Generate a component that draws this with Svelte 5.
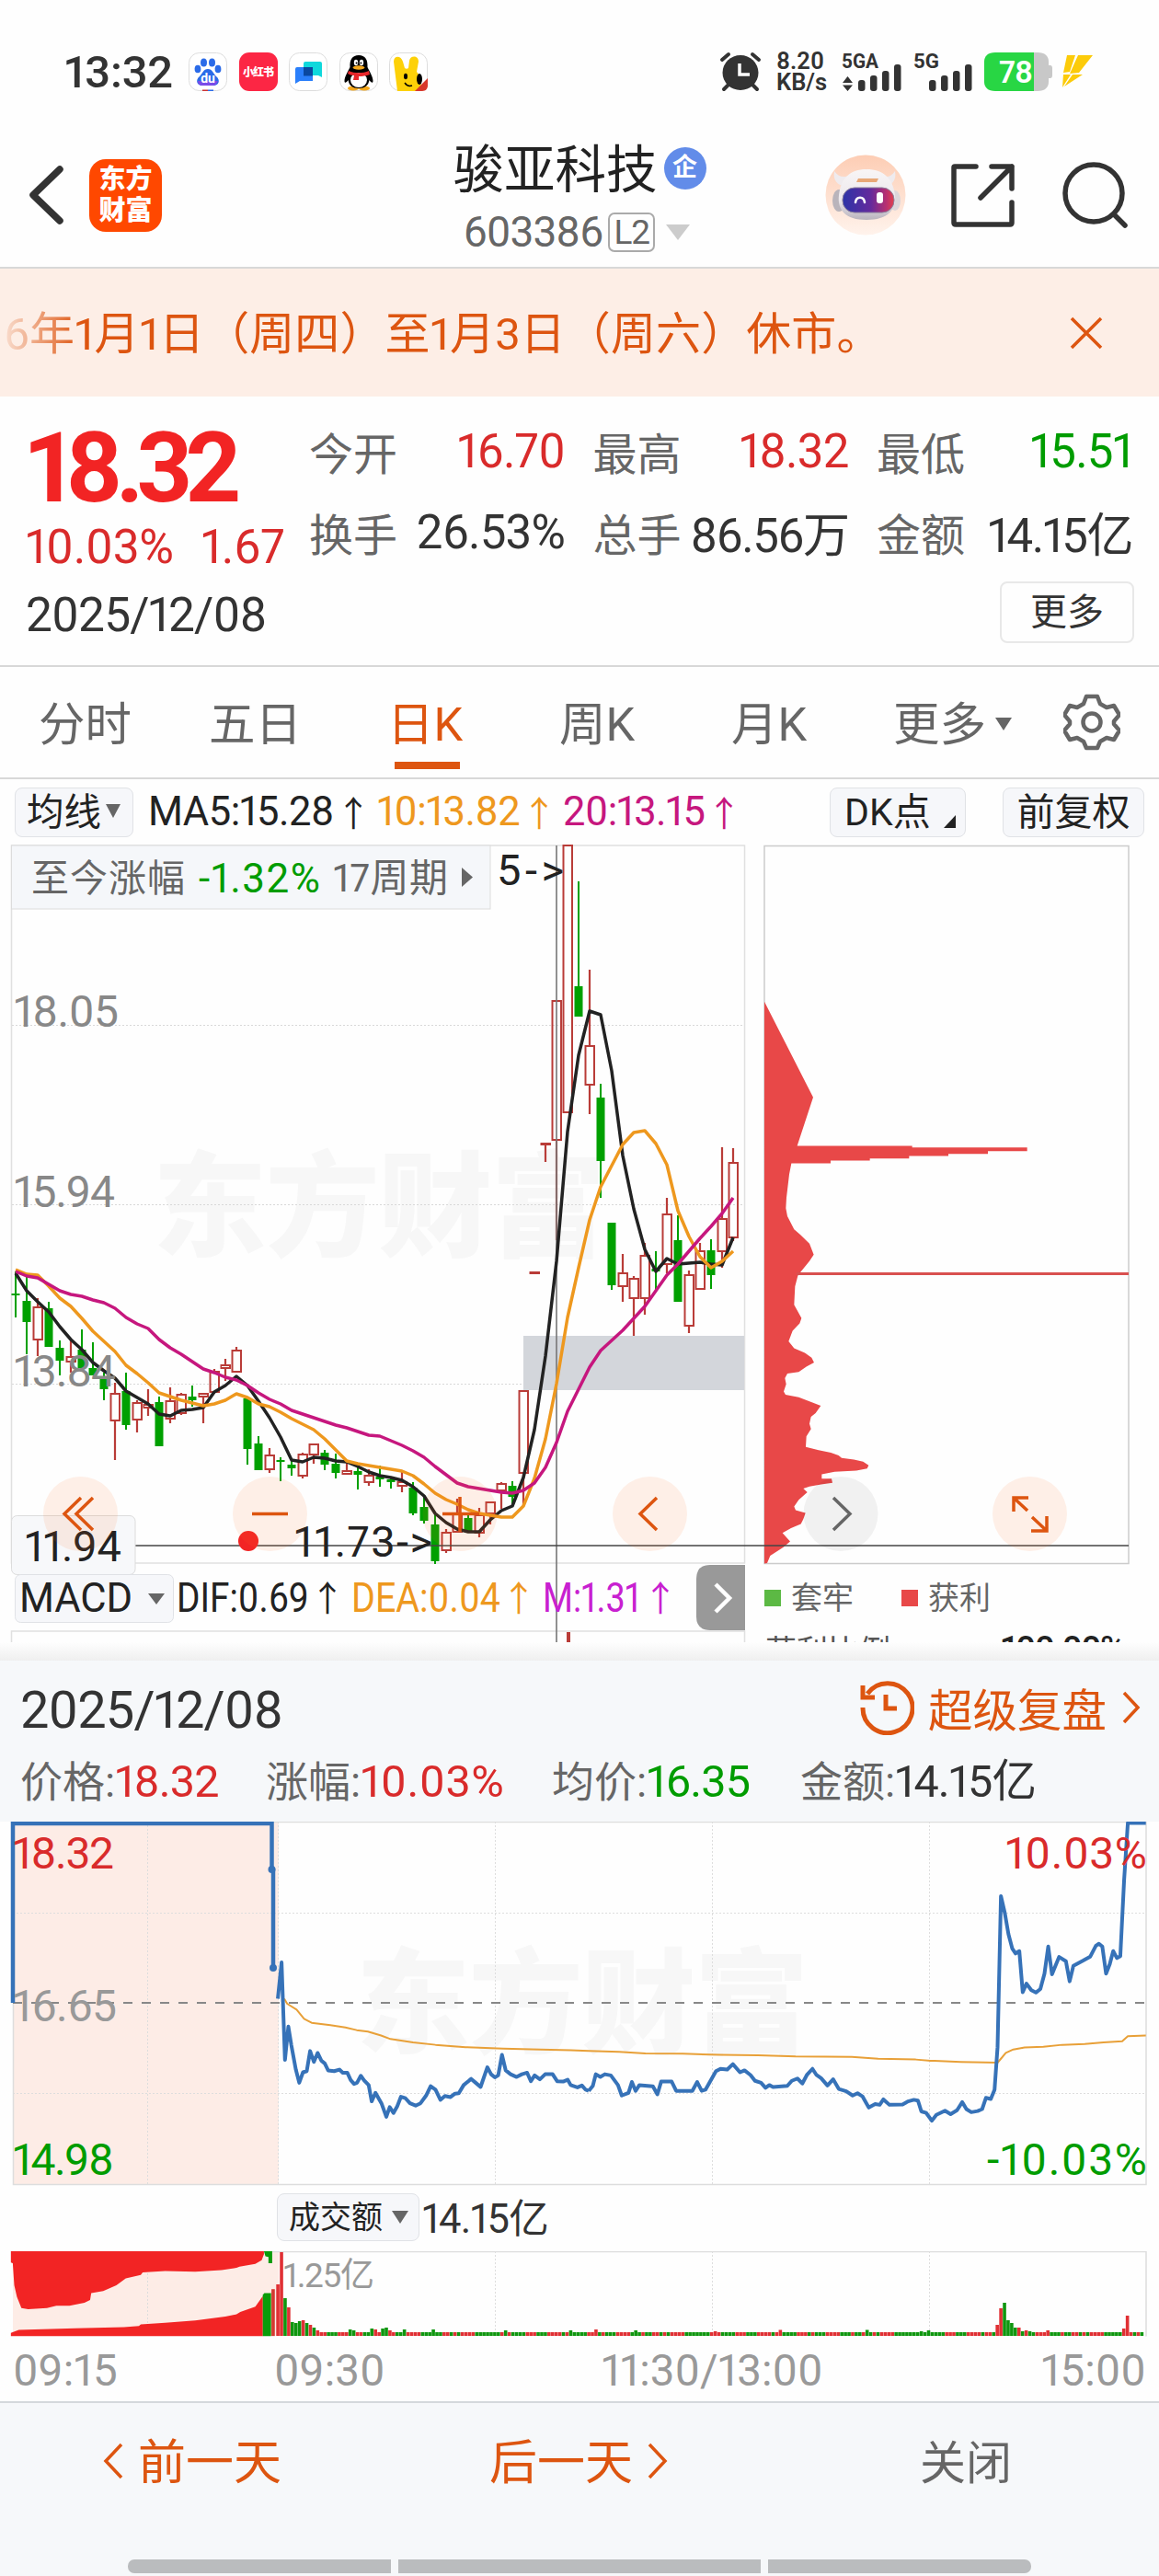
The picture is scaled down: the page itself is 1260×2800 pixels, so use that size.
<script lang="ts">
	type Tone = 'up' | 'down' | 'plain';

	const quotes: { label: string; value: string; tone: Tone }[] = [
		{ label: '今开', value: '16.70', tone: 'up' },
		{ label: '最高', value: '18.32', tone: 'up' },
		{ label: '最低', value: '15.51', tone: 'down' },
		{ label: '换手', value: '26.53%', tone: 'plain' },
		{ label: '总手', value: '86.56万', tone: 'plain' },
		{ label: '金额', value: '14.15亿', tone: 'plain' }
	];

	const daily: { label: string; value: string; tone: Tone }[] = [
		{ label: '价格:', value: '18.32', tone: 'up' },
		{ label: '涨幅:', value: '10.03%', tone: 'up' },
		{ label: '均价:', value: '16.35', tone: 'down' },
		{ label: '金额:', value: '14.15亿', tone: 'plain' }
	];

	const tabs = ['分时', '五日', '日K', '周K', '月K', '更多'];
	let activeTab = '日K';

	// candle: colour, high, body top, body bottom, low
	const candles: [string, number, number, number, number][] = [
		['g', 1382, 1406, 1408, 1432], ['g', 1388, 1414, 1437, 1472], ['r', 1411, 1421, 1456, 1474],
		['g', 1415, 1422, 1464, 1464], ['g', 1457, 1465, 1479, 1495], ['r', 1457, 1475, 1480, 1492],
		['g', 1445, 1467, 1487, 1487], ['g', 1459, 1487, 1495, 1495], ['g', 1492, 1498, 1510, 1522],
		['r', 1503, 1515, 1544, 1587], ['g', 1492, 1512, 1549, 1554], ['r', 1522, 1525, 1543, 1557],
		['r', 1510, 1527, 1530, 1539], ['g', 1518, 1524, 1572, 1572], ['r', 1508, 1523, 1542, 1547],
		['r', 1514, 1516, 1536, 1538], ['g', 1506, 1518, 1522, 1529], ['r', 1514, 1515, 1518, 1547],
		['r', 1488, 1491, 1513, 1515], ['r', 1477, 1484, 1487, 1501], ['r', 1464, 1468, 1491, 1491],
		['g', 1520, 1520, 1575, 1592], ['g', 1561, 1569, 1598, 1598], ['r', 1574, 1582, 1597, 1601],
		['g', 1584, 1587, 1589, 1610], ['g', 1585, 1592, 1596, 1604], ['r', 1579, 1581, 1604, 1607],
		['r', 1569, 1570, 1581, 1591], ['g', 1576, 1579, 1592, 1598], ['g', 1580, 1591, 1601, 1607],
		['r', 1588, 1599, 1602, 1602], ['g', 1595, 1599, 1603, 1619], ['r', 1597, 1604, 1611, 1615],
		['g', 1593, 1605, 1608, 1616], ['g', 1605, 1608, 1611, 1618], ['r', 1599, 1611, 1615, 1622],
		['g', 1611, 1617, 1645, 1647], ['g', 1627, 1638, 1653, 1656], ['g', 1645, 1657, 1697, 1700],
		['r', 1662, 1666, 1685, 1688], ['r', 1629, 1646, 1665, 1666], ['g', 1645, 1650, 1664, 1666],
		['r', 1639, 1647, 1666, 1671], ['r', 1632, 1633, 1645, 1657], ['r', 1611, 1613, 1620, 1640],
		['g', 1610, 1615, 1627, 1638], ['r', 1511, 1512, 1601, 1637], ['r', 1383, 1383, 1384, 1384],
		['r', 1243, 1243, 1244, 1263], ['r', 1088, 1088, 1239, 1348], ['r', 919, 919, 1209, 1209],
		['g', 958, 1072, 1105, 1105], ['r', 1054, 1137, 1179, 1211], ['g', 1178, 1193, 1262, 1302],
		['g', 1329, 1329, 1397, 1402], ['r', 1363, 1384, 1398, 1415], ['r', 1387, 1390, 1411, 1452],
		['r', 1351, 1365, 1411, 1429], ['g', 1360, 1379, 1382, 1402], ['r', 1302, 1320, 1374, 1384],
		['g', 1321, 1348, 1415, 1415], ['r', 1381, 1386, 1441, 1449], ['r', 1351, 1360, 1401, 1402],
		['g', 1347, 1359, 1386, 1401], ['r', 1247, 1325, 1360, 1378], ['r', 1248, 1264, 1345, 1349]
	];

	const ma5 = [
		1384, 1403, 1415, 1426, 1442, 1456, 1467, 1481, 1490, 1498, 1512, 1519, 1526, 1537, 1539, 1533, 1532,
		1530, 1513, 1506, 1496, 1506, 1523, 1541, 1562, 1587, 1589, 1584, 1585, 1588, 1589, 1594, 1600, 1604,
		1606, 1609, 1616, 1626, 1645, 1655, 1662, 1665, 1665, 1652, 1642, 1637, 1606, 1554, 1474, 1371, 1230,
		1147, 1099, 1103, 1164, 1256, 1314, 1358, 1382, 1368, 1374, 1373, 1372, 1374, 1375, 1345
	];
	const ma10 = [
		1380, 1385, 1386, 1398, 1411, 1420, 1433, 1447, 1458, 1469, 1484, 1493, 1503, 1514, 1518, 1522, 1525,
		1528, 1526, 1522, 1515, 1519, 1526, 1529, 1535, 1542, 1548, 1554, 1564, 1576, 1588, 1591, 1593, 1595,
		1597, 1599, 1604, 1613, 1623, 1630, 1635, 1641, 1645, 1647, 1649, 1649, 1637, 1607, 1564, 1504, 1432,
		1378, 1326, 1290, 1267, 1244, 1231, 1229, 1243, 1266, 1316, 1344, 1366, 1378, 1371, 1360
	];
	const ma20 = [
		1382, 1387, 1389, 1396, 1403, 1407, 1409, 1413, 1416, 1422, 1432, 1439, 1444, 1456, 1465, 1472, 1480,
		1488, 1492, 1497, 1500, 1506, 1514, 1521, 1526, 1533, 1537, 1541, 1545, 1549, 1552, 1556, 1560, 1561,
		1566, 1571, 1577, 1584, 1594, 1603, 1612, 1616, 1618, 1620, 1622, 1623, 1620, 1612, 1595, 1568, 1534,
		1510, 1486, 1468, 1457, 1446, 1433, 1420, 1403, 1386, 1374, 1360, 1346, 1333, 1319, 1302
	];

	const candleX = (i: number) => 17 + i * 12;
	const line = (ys: number[]) => ys.map((y, i) => `${candleX(i)},${y}`).join(' ');

	// cost distribution outline, drawn in its own units
	const chips =
		'93,329 252,510 200,602 575,602 575,605 950,605 950,612 822,612 822,617 693,617 693,621 565,621 565,626 437,626 437,630 309,630 309,635 181,635 174,656 165,700 163,720 168,735 190,760 210,770 240,787 254,808 240,820 212,840 202,848 193,868 190,903 214,928 208,938 185,952 172,972 190,985 225,994 247,1003 255,1012 230,1020 205,1030 168,1033 160,1042 164,1053 156,1067 162,1073 205,1078 277,1094 260,1108 245,1115 240,1128 245,1138 230,1152 228,1172 270,1178 310,1183 335,1188 345,1193 385,1196 415,1200 433,1207 428,1213 393,1217 322,1219 280,1224 280,1232 312,1232 315,1240 278,1243 240,1247 220,1251 233,1258 205,1272 190,1285 195,1292 227,1297 220,1309 212,1318 180,1326 152,1335 177,1351 155,1362 112,1378 102,1392 93,1393';

	const morning =
		'740,505 750,411 759,663 768,577 776,625 788,688 797,722 807,695 817,692 826,640 836,668 846,645 856,665 865,672 874,690 890,692 904,688 913,696 925,696 934,715 943,725 951,722 961,704 970,716 982,728 990,770 1000,748 1016,775 1029,810 1038,785 1048,800 1058,783 1068,758 1080,762 1092,775 1107,781 1120,775 1135,755 1147,731 1160,740 1173,766 1185,756 1200,759 1212,750 1222,749 1235,728 1255,712 1267,722 1280,733 1298,682 1308,700 1318,708 1327,703 1337,650 1347,690 1360,700 1376,707 1390,700 1404,696 1414,718 1424,703 1438,713 1452,700 1472,700 1484,718 1500,719 1512,714 1520,728 1538,734 1550,729 1560,740 1568,743';
	const afternoon =
		'49,743 60,730 68,700 80,707 92,700 108,703 127,728 137,755 155,748 164,720 174,743 184,728 220,731 232,752 242,719 270,719 282,743 325,743 338,720 350,743 360,740 388,692 400,686 418,688 433,674 452,695 464,690 480,702 492,717 508,722 520,735 530,728 540,733 578,730 590,717 605,711 618,724 630,702 645,686 655,701 668,710 685,729 700,713 715,738 735,744 752,755 765,749 778,757 795,786 812,777 824,779 834,765 850,779 885,778 900,770 915,766 926,768 935,796 948,800 963,820 975,805 998,794 1013,803 1030,793 1044,772 1055,790 1068,798 1085,795 1097,790 1107,761 1120,764 1130,740 1138,630 1147,240 1157,282 1167,338 1177,375 1186,388 1196,382 1205,488 1215,466 1228,483 1240,489 1252,480 1263,440 1273,370 1283,442 1302,397 1320,408 1330,460 1340,420 1365,407 1385,396 1400,368 1408,363 1417,370 1427,440 1437,415 1446,382 1456,400 1465,395 1475,200 1485,51 1533,51';
	const avgMorning =
		'757,505 765,518 790,533 810,557 830,567 880,573 920,579 950,586 980,590 1015,600 1040,609 1100,618 1160,624 1240,630 1340,634 1440,636 1520,638 1568,640';
	const avgAfternoon =
		'49,640 130,642 200,646 300,647 400,650 500,651 600,654 750,655 820,660 920,662 960,665 1040,668 1138,670 1147,660 1160,645 1180,636 1210,631 1260,629 1310,624 1370,622 1420,618 1470,615 1485,602 1533,600';

	// minute volume: quiet minutes follow the pattern, busy ones are listed
	const quiet = 'ggggrgrggggrrrgggrrrrgrrggggrrrgrgggrrrrgggrggrrgrgrrrrggg';
	const busy: Record<number, [string, number]> = {
		0: ['r', 56], 1: ['r', 91], 2: ['g', 41], 3: ['r', 31], 4: ['g', 15], 5: ['g', 14], 6: ['g', 16],
		7: ['r', 17], 8: ['g', 14], 9: ['r', 12], 10: ['g', 9], 11: ['r', 6], 20: ['g', 7], 21: ['g', 6],
		26: ['g', 8], 27: ['r', 7], 29: ['g', 8], 30: ['g', 9], 31: ['r', 6], 35: ['g', 7], 43: ['g', 7],
		63: ['g', 6], 81: ['g', 6], 88: ['r', 7], 99: ['g', 6], 121: ['r', 5], 139: ['r', 6.5],
		163: ['g', 6.5], 178: ['g', 5], 180: ['g', 6], 199: ['r', 12], 200: ['r', 30], 201: ['g', 36],
		202: ['g', 17], 203: ['g', 14], 204: ['g', 9], 205: ['r', 9], 206: ['g', 5], 207: ['r', 6],
		208: ['g', 5], 213: ['r', 6], 234: ['r', 8], 235: ['r', 22]
	};
	const volumes = Array.from({ length: 240 }, (_, i) => busy[i] ?? [quiet[i % quiet.length], 4]) as [
		string,
		number
	][];
</script>

<div class="screen">
	<div class="status">
		<span class="clock">13:32</span>
		<div class="apps">
			<svg class="app" viewBox="0 0 42 42">
				<rect x=".5" y=".5" width="41" height="41" rx="11" fill="#fff" stroke="#ddd" />
				<g fill="#2b6be8">
					<ellipse cx="10" cy="18" rx="3.4" ry="4.3" />
					<ellipse cx="16.500" cy="11" rx="3.500" ry="4.500" />
					<ellipse cx="25.500" cy="11" rx="3.500" ry="4.500" />
					<ellipse cx="32" cy="18" rx="3.400" ry="4.300" />
					<path d="M21 18c5 0 6 5 9 8 5 4 3 10-3 10H15c-6 0-8-6-3-10 3-3 4-8 9-8z" />
				</g>
				<path d="M10 31h22c-1 3-3 5-6 5H15c-3 0-5-2-5-5z" fill="#7a4be8" />
				<text x="21" y="33" font-size="14" font-weight="700" fill="#fff" text-anchor="middle">du</text>
				<path d="M15 40.500h6v1.500h-6z" fill="#c33" />
				<path d="M21 40.500h6v1.500h-6z" fill="#2b6be8" />
			</svg>
			<svg class="app" viewBox="0 0 42 42">
				<rect width="42" height="42" rx="11" fill="#fc2644" />
				<text x="21" y="26" font-size="12" font-weight="900" fill="#fff" text-anchor="middle" textLength="34">小红书</text>
			</svg>
			<svg class="app" viewBox="0 0 42 42">
				<rect x=".5" y=".5" width="41" height="41" rx="11" fill="#fff" stroke="#ddd" />
				<path d="M18 10h16a2 2 0 0 1 2 2v15l-4-2H16V12a2 2 0 0 1 2-2z" fill="#0fd8dc" />
				<path d="M9 16h17v15H12l-5 3V18a2 2 0 0 1 2-2z" fill="#2a7ffb" />
				<path d="M16 16h10v9.500H16z" fill="#0a48a0" />
			</svg>
			<svg class="app" viewBox="0 0 42 42">
				<rect x=".5" y=".5" width="41" height="41" rx="11" fill="#fff" stroke="#ddd" />
				<ellipse cx="15" cy="39" rx="6" ry="2.500" fill="#f5a91c" />
				<ellipse cx="27" cy="39" rx="6" ry="2.500" fill="#f5a91c" />
				<path d="M21 3c7 0 10 5 9.500 13 3 6 6 11 6 15 0 3-2 2-4-1-1 6-5 9-11.500 9S10.500 36 9.500 30c-2 3-4 4-4 1 0-4 3-9 6-15C11 8 14 3 21 3z" fill="#000" />
				<ellipse cx="21" cy="30" rx="9" ry="8" fill="#fff" />
				<ellipse cx="18" cy="11" rx="2.200" ry="3.200" fill="#fff" />
				<ellipse cx="24" cy="11" rx="2.200" ry="3.200" fill="#fff" />
				<circle cx="18.600" cy="11.500" r="1" /><circle cx="23.400" cy="11.500" r="1" />
				<ellipse cx="21" cy="16.500" rx="6.500" ry="2.200" fill="#f5a91c" />
				<path d="M10 20c7 3 15 3 22 0l1 4c-4 1.500-8 2-12 2v4h-6l1-5c-3 0-5-1-7-2z" fill="#e8262a" />
			</svg>
			<svg class="app" viewBox="0 0 42 42">
				<rect x=".5" y=".5" width="41" height="41" rx="11" fill="#fff" stroke="#ddd" />
				<path d="M9 42 5 10C5 3 13 3 15 10l2 7c1 1 3 1 4 0l1-8c1-6 10-6 10 1l-2 11c5 6 6 13 3 21z" fill="#fdd108" />
				<ellipse cx="18" cy="26" rx="2" ry="3.200" /><ellipse cx="33" cy="29" rx="3" ry="6" />
				<path d="M17 33c2 3 5 4 8 3" fill="none" stroke="#000" stroke-width="1.400" />
				<path d="M28 42 42 28v8c0 3-2 6-6 6z" fill="#d8392c" />
			</svg>
		</div>
		<div class="signals">
			<svg width="44" height="42" viewBox="0 0 44 42">
				<ellipse cx="22" cy="22" rx="19.500" ry="19" fill="#333" />
				<path d="M2 8 9 2M42 8 35 2M4 40l6-6M40 40l-6-6" stroke="#333" stroke-width="4" stroke-linecap="round" />
				<path d="M21 12v12h11" fill="none" stroke="#fff" stroke-width="3.500" />
			</svg>
			<div class="speed"><span>8.20</span><span>KB/s</span></div>
			<svg width="66" height="42" viewBox="0 0 66 42">
				<text x="0" y="17" font-size="22" font-weight="700" fill="#333" textLength="40" lengthAdjust="spacingAndGlyphs">5GA</text>
				<path d="m6.500 26 5.500 7H1zM6.500 42 1 35.500h11z" fill="#333" />
				<g fill="#333">
					<rect x="18" y="30" width="7.500" height="12" rx="3" /><rect x="31" y="25" width="7.500" height="17" rx="3" />
					<rect x="44" y="20" width="7.500" height="22" rx="3" /><rect x="57" y="13" width="7.500" height="29" rx="3" />
				</g>
			</svg>
			<svg width="66" height="42" viewBox="0 0 66 42">
				<text x="0" y="17" font-size="22" font-weight="700" fill="#333" textLength="28" lengthAdjust="spacingAndGlyphs">5G</text>
				<g fill="#333">
					<rect x="17" y="30" width="7.500" height="12" rx="3" /><rect x="30" y="25" width="7.500" height="17" rx="3" />
					<rect x="43" y="20" width="7.500" height="22" rx="3" /><rect x="56" y="13" width="7.500" height="29" rx="3" />
				</g>
			</svg>
			<svg width="74" height="42" viewBox="0 0 74 42">
				<path d="M54 0h4c8 0 12 4 12 10v4h2c1 0 2 1 2 3v8c0 2-1 3-2 3h-2v4c0 6-4 10-12 10h-4z" fill="#c8c8c8" />
				<path d="M12 0h42v42H12C4 42 0 38 0 32V10C0 4 4 0 12 0z" fill="#28d644" />
				<text x="16" y="33" font-size="34" font-weight="600" fill="#fff" textLength="37">78</text>
			</svg>
			<svg width="36" height="36" viewBox="0 0 36 36" class="bolt">
				<path d="M6 0h9L9 18l-7 1zM18 0h16L19 19l-10 1zM2 21h8L1 35zM12 21h11L3 34z" fill="#fccb0a" />
			</svg>
		</div>
	</div>

	<header>
		<div class="left">
			<svg width="38" height="66" viewBox="0 0 38 66">
				<path d="M33 5 4 33l29 28" fill="none" stroke="#333" stroke-width="7.500" stroke-linecap="round" stroke-linejoin="round" />
			</svg>
			<div class="logo"><span>东方</span><span>财富</span></div>
		</div>
		<div class="name">
			<div class="title">骏亚科技<i>企</i></div>
			<div class="code">603386<b>L2</b><em></em></div>
		</div>
		<div class="right">
			<svg width="88" height="88" viewBox="0 0 88 88">
				<defs>
					<linearGradient id="halo" x1="0" y1="0" x2="0" y2="1"><stop offset="0" stop-color="#fdcdb4" /><stop offset="1" stop-color="#fff3ec" /></linearGradient>
					<linearGradient id="visor"><stop offset="0" stop-color="#2c34a8" /><stop offset=".55" stop-color="#652a9c" /><stop offset=".85" stop-color="#b83070" /><stop offset="1" stop-color="#e2404c" /></linearGradient>
					<linearGradient id="shell" x1="0" y1="0" x2="0" y2="1"><stop offset="0" stop-color="#f8f5f6" /><stop offset=".6" stop-color="#ece8ec" /><stop offset="1" stop-color="#b9b3bd" /></linearGradient>
				</defs>
				<circle cx="44" cy="44" r="43.500" fill="url(#halo)" />
				<path d="M10 18c-2 10 4 17 14 16l4-12c-8 4-14 2-18-4zM76 18c2 10-4 17-12 16l-4-12c7 4 12 2 16-4z" fill="#efebee" />
				<ellipse cx="15" cy="50" rx="7" ry="12" fill="#b9b4bb" /><ellipse cx="76" cy="50" rx="6" ry="11" fill="#dcd6da" />
				<path d="M45 16c18 0 29 10 31 28 2 16-8 27-31 27S13 60 15 44c2-18 12-28 30-28z" fill="url(#shell)" />
				<path d="M36 26h22l-2 4H34z" fill="#e8a878" />
				<rect x="19" y="36" width="56" height="27" rx="13" fill="url(#visor)" stroke="#8a7f9c" />
				<path d="M33 52c1-7 9-7 10 0" fill="none" stroke="#fff" stroke-width="2.500" stroke-linecap="round" />
				<rect x="56" y="41" width="7" height="12" rx="3" fill="#fff" />
			</svg>
			<svg width="70" height="70" viewBox="0 0 70 70" class="line-icon">
				<path d="M27 4H4q-1 0-1 1v60q0 2 2 2h59q2 0 2-2V43M44 4h22v24M66 4 32 38" />
			</svg>
			<svg width="72" height="72" viewBox="0 0 72 72" class="line-icon">
				<circle cx="34" cy="34" r="31" /><path d="m56 57 12 12" />
			</svg>
		</div>
	</header>

	<div class="notice">
		<span>6年1月1日（周四）至1月3日（周六）休市。</span>
		<svg width="36" height="36" viewBox="0 0 36 36"><path d="m2 2 32 32M34 2 2 34" stroke="#dd5510" stroke-width="3.500" /></svg>
	</div>

	<section class="quote">
		<div class="price">
			<strong>18.32</strong>
			<div class="change up"><span>10.03%</span><span>1.67</span></div>
			<div class="date">2025/12/08</div>
		</div>
		<div class="details">
			<div class="grid">
				{#each quotes as q}
					<div class="cell"><span class="label">{q.label}</span><span class={q.tone}>{q.value}</span></div>
				{/each}
			</div>
			<button class="more">更多</button>
		</div>
	</section>

	<nav>
		{#each tabs as tab}
			<button class="tab" class:active={tab === activeTab} on:click={() => (activeTab = tab)}>
				{tab}{#if tab === '更多'}<em></em>{/if}
			</button>
		{/each}
		<svg width="62" height="62" viewBox="0 0 62 62" class="gear">
			<path d="M25 3h12l3 8 7 4 8-2 6 10-6 7v3l6 7-6 10-8-2-7 4-3 7H25l-3-7-7-4-8 2-6-10 6-7v-3l-6-7 6-10 8 2 7-4z" />
			<circle cx="31" cy="31" r="9.500" />
		</svg>
	</nav>

	<div class="indicators">
		<button class="chip avg">均线<em></em></button>
		<span class="ma black">MA5:15.28<i>↑</i></span>
		<span class="ma orange">10:13.82<i>↑</i></span>
		<span class="ma pink">20:13.15<i>↑</i></span>
		<button class="chip dk">DK点<em></em></button>
		<button class="chip">前复权</button>
	</div>

	<svg class="kline" width="1260" height="867" viewBox="0 918 1260 867">
		<text class="mark" x="166" y="1356" font-size="124" textLength="492">东方财富</text>
		<g class="frame">
			<rect x="12.500" y="919" width="797" height="780" />
			<path d="M12.500 1785v-12h797v12" />
		</g>
		<path d="M13 1114.500h796M13 1309.500h796M13 1504.500h796" stroke="#d8d8d8" stroke-dasharray="2 2" />
		<rect x="569" y="1452" width="240" height="59" fill="#d3d6db" />

		{#each candles as [kind, high, top, bottom, low], i}
			{#if kind === 'g'}
				<path d="M{candleX(i)} {high}V{low}" stroke="#00a000" stroke-width="2" />
				<rect x={candleX(i) - 4.5} y={top} width="9" height={bottom - top} fill="#00a000" />
			{:else}
				<path d="M{candleX(i)} {high}V{top}M{candleX(i)} {bottom}V{low}" stroke="#b93c38" stroke-width="2.200" />
				<rect x={candleX(i) - 4.5} y={top} width="9.500" height={bottom - top} fill="none" stroke="#b93c38" stroke-width="2" />
			{/if}
		{/each}
		<path d="M605 919V1785" stroke="#777" stroke-width="2" opacity=".8" />
		<polyline class="ma-line" points={line(ma5)} stroke="#222" />
		<polyline class="ma-line" points={line(ma10)} stroke="#ee981e" />
		<polyline class="ma-line" points={line(ma20)} stroke="#c6177e" />

		<g class="axis">
			<text x="15" y="1116" textLength="114">18.05</text>
			<text x="15" y="1312" textLength="110">15.94</text>
			<text x="15" y="1507" textLength="111">13.84</text>
		</g>
		<rect x="12.500" y="919" width="520.500" height="69" fill="#f5f7fa" stroke="#dcdcdc" />
		<text x="34" y="969" font-size="41" fill="#666" textLength="167">至今涨幅</text>
		<text x="216" y="970" font-size="44" fill="#009c00" textLength="132">-1.32%</text>
		<text x="362" y="969" font-size="42" fill="#666" textLength="125">17周期</text>
		<path d="m502 943 12 10.500-12 10.500z" fill="#666" />
		<text x="540" y="962" font-size="47" fill="#222" textLength="73">5-&gt;</text>

		<rect x="831" y="919.500" width="396" height="780" fill="none" stroke="#ccc" stroke-width="1.500" />
		<polygon points={chips} transform="translate(800 900) scale(.33333 .574)" fill="#e84848" />
		<path d="M866 1384.500h361" stroke="#d9504f" stroke-width="3" />

		<path d="M147 1680H1227" stroke="#444" stroke-width="1.300" />
		<rect x="12.500" y="1647.500" width="134.500" height="64" rx="6" fill="#f7f8fa" stroke="#dcdcdc" />
		<text x="27" y="1697" font-size="47" fill="#222" textLength="105">11.94</text>
		<circle cx="270" cy="1675" r="11" fill="#f22424" />
		<text x="320" y="1692" font-size="47" fill="#222" textLength="150">11.73-&gt;</text>

		<g class="tools">
			<circle cx="87.500" cy="1645.500" r="40.500" />
			<circle cx="293.500" cy="1645.500" r="40.500" />
			<circle cx="500" cy="1645.500" r="40.500" />
			<circle cx="706.500" cy="1645.500" r="40.500" />
			<circle class="off" cx="914" cy="1645.500" r="40.500" />
			<circle cx="1119.500" cy="1645.500" r="40.500" />
			<path d="m88 1628-18 17.500 18 17.500M101 1628l-18 17.500 18 17.500M274 1645.500h39M481 1645.500h40M500 1627v38M714 1628l-18 17.500 18 17.500" />
			<path d="m906 1628 18 17.500-18 17.500" stroke="#666" />
			<path d="M1118 1628h-16v15M1102 1628l15 14M1121 1664h17v-16M1138 1664l-16-15" />
		</g>

		<rect x="16.500" y="1711.500" width="172" height="52" rx="6" class="pill" />
		<text x="21" y="1752" font-size="43.500" fill="#222" textLength="123">MACD</text>
		<path d="M161 1732h18l-9 12z" fill="#666" />
		<g font-size="44">
			<text x="192" y="1752" fill="#222" textLength="144" lengthAdjust="spacingAndGlyphs">DIF:0.69</text>
			<text x="382" y="1752" fill="#ee981e" textLength="162" lengthAdjust="spacingAndGlyphs">DEA:0.04</text>
			<text x="590" y="1752" fill="#c820d0" textLength="106" lengthAdjust="spacingAndGlyphs">M:1.31</text>
		</g>
		<g font-size="38" class="arrow">
			<text x="337" y="1751" fill="#222">↑</text>
			<text x="545" y="1751" fill="#ee981e">↑</text>
			<text x="699" y="1751" fill="#c820d0">↑</text>
		</g>
		<path d="M810 1701h-38q-15 0-15 15v41q0 15 15 15h38z" fill="#999" />
		<path d="m778 1722 15 15-15 15" fill="none" stroke="#fff" stroke-width="4.500" />
		<path d="M618 1774v11" stroke="#b93c38" stroke-width="4" />

		<rect x="831" y="1728" width="18" height="18" fill="#5cb944" />
		<text x="860" y="1749" font-size="34" fill="#666">套牢</text>
		<rect x="980" y="1728" width="18" height="18" fill="#e84848" />
		<text x="1009" y="1749" font-size="34" fill="#666">获利</text>
		<text x="832" y="1807" font-size="34" fill="#555">获利比例</text>
		<text x="1088" y="1806" font-size="38" font-weight="500" fill="#222" textLength="136">100.00%</text>
	</svg>

	<div class="fade"></div>
	<section class="day">
		<div class="day-head">
			<span>2025/12/08</span>
			<a href="#replay">
				<svg width="60" height="60" viewBox="0 0 60 60">
					<path d="M4 30a27 27 0 1 0 5-15" /><path d="M4 6v13h13" /><path d="M29 16v15h12" />
				</svg>
				超级复盘
				<svg width="22" height="36" viewBox="0 0 22 36"><path d="m3 2 15 16L3 34" /></svg>
			</a>
		</div>
		<div class="day-row">
			{#each daily as d}
				<div><span class="label">{d.label}</span><span class={d.tone}>{d.value}</span></div>
			{/each}
		</div>
	</section>

	<svg class="minute" width="1260" height="396" viewBox="0 1980 1260 396">
		<rect x="14" y="1980" width="289" height="394" fill="#fdece6" />
		<text class="mark" x="387" y="2222" textLength="492">东方财富</text>
		<path d="M160.500 1980v394M302.500 1980v394M538.500 1980v394M774.500 1980v394M1010.500 1980v394M14 2079.500h1232M14 2275.500h1232" stroke="#ddd" stroke-dasharray="2 2" />
		<path d="M14.500 1980.500h1231.500v394H14.500z" fill="none" stroke="#ddd" stroke-width="1.500" />
		<path d="M14 2177h1232" stroke="#888" stroke-width="1.800" stroke-dasharray="10 10" />
		<path d="M14 2177V1982H295.500V2031" fill="none" stroke="#3672b8" stroke-width="4.500" />
		<path d="M297 2031V2139" stroke="#3672b8" stroke-width="4.500" />
		<circle cx="295.500" cy="2032" r="4" fill="#3672b8" /><circle cx="297" cy="2139" r="4" fill="#3672b8" />
		<g transform="translate(0 1960) scale(.40816 .42088)">
			<polyline class="avg-line" points={avgMorning} /><polyline class="now-line" points={morning} />
		</g>
		<g transform="translate(620 1960) scale(.40816 .42088)">
			<polyline class="avg-line" points={avgAfternoon} /><polyline class="now-line" points={afternoon} />
		</g>
		<text x="14" y="2031" fill="#d92b2b" textLength="110">18.32</text>
		<text x="14" y="2197" fill="#999" textLength="113">16.65</text>
		<text x="14" y="2364" fill="#009c00" textLength="110">14.98</text>
		<text x="1093" y="2031" fill="#d92b2b" textLength="154">10.03%</text>
		<text x="1073" y="2364" fill="#009c00" textLength="174">-10.03%</text>
	</svg>

	<div class="turnover">
		<button class="chip">成交额<em></em></button>
		<span>14.15亿</span>
	</div>

	<svg class="volume" width="1260" height="94" viewBox="0 2447 1260 94">
		<rect x="14" y="2447" width="289" height="92" fill="#fdece6" />
		<path d="M160.500 2447v92M538.500 2447v92M774.500 2447v92M1010.500 2447v92" stroke="#ddd" stroke-dasharray="2 2" />
		<path d="M14 2447.500h1232v92" fill="none" stroke="#ddd" stroke-width="1.500" />
		<g transform="translate(0 1960) scale(.40816 .42088)">
			<path d="M29 1157V1186L34 1188 38 1245 45 1275 57 1304 75 1307 125 1304 150 1298 185 1298 225 1290 240 1283 243 1265 275 1260 310 1245 335 1227 375 1218 380 1212 440 1208 520 1210 590 1206 630 1200 638 1197 680 1190 697 1180 703 1165V1157z" fill="#f22424" />
			<path d="M703 1157 707 1170 715 1172V1188H725V1157z" fill="#0a9c0a" />
			<path d="M29 1376V1368L50 1360 200 1356 330 1353 370 1350 375 1346 440 1342 520 1336 600 1326 630 1320 640 1314 680 1300 700 1273V1376z" fill="#f22424" />
			<path d="M700 1376V1270L704 1265H722V1376z" fill="#0a9c0a" />
			<path d="M723 1376V1255H732V1376z" fill="#d43a30" />
		</g>
		{#each volumes as [kind, height], i}
			<rect x={300.3 + i * 3.93} y={2539 - height} width="3.600" {height} fill={kind === 'r' ? '#e03034' : '#0f960f'} />
		{/each}
		<text x="308" y="2486" font-size="37" fill="#999" textLength="99">1.25亿</text>
	</svg>

	<div class="times">
		<span>09:15</span><span>09:30</span><span>11:30/13:00</span><span>15:00</span>
	</div>

	<footer>
		<div class="actions">
			<button><svg width="24" height="40" viewBox="0 0 24 40"><path d="M21 2 4 20l17 18" /></svg><span>前一天</span></button>
			<button><span>后一天</span><svg width="24" height="40" viewBox="0 0 24 40"><path d="m3 2 17 18L3 38" /></svg></button>
			<button class="close"><span>关闭</span></button>
		</div>
		<div class="home"><i></i><i></i><i></i></div>
	</footer>
</div>

<style>
	:global(body) {
		margin: 0;
		background: #fff;
	}

	.screen {
		width: 1260px;
		height: 2800px;
		overflow: hidden;
		background: #fefefe;
		color: #333;
		font-family: Roboto, 'Noto Sans CJK SC', sans-serif;
		font-variant-numeric: proportional-nums;
		white-space: nowrap;
	}

	button {
		border: 0;
		padding: 0;
		background: none;
		color: inherit;
		font: inherit;
	}

	svg {
		display: block;
		flex: none;
	}

	em {
		display: inline-block;
		width: 0;
		height: 0;
		border: 9px solid transparent;
		border-top: 14px solid #666;
		border-bottom: 0;
	}

	i {
		font-style: normal;
	}

	.up {
		color: #d92b2b;
	}

	.down {
		color: #009c00;
	}

	.plain {
		color: #333;
	}

	.label {
		color: #666;
	}

	.status {
		display: flex;
		align-items: center;
		height: 140px;
		padding: 39px 70px 23px 70px;
		box-sizing: border-box;
	}

	.clock {
		width: 135px;
		font-size: 49px;
		font-weight: 500;
		letter-spacing: -0.2px;
	}

	.apps {
		display: flex;
		gap: 12.6px;
	}

	.app {
		width: 42px;
		height: 42px;
	}

	.signals {
		display: flex;
		align-items: center;
		margin-left: auto;
	}

	.signals svg {
		overflow: visible;
	}

	.speed {
		display: flex;
		flex-direction: column;
		width: 71px;
		margin-left: 17px;
		font-size: 25.5px;
		line-height: 23px;
		font-weight: 600;
	}

	.signals svg:nth-of-type(3) {
		margin: 0 11px 0 12px;
	}

	.bolt {
		margin-left: 10px;
	}

	header {
		display: grid;
		grid-template-columns: 1fr auto 1fr;
		height: 152px;
		border-bottom: 2px solid #d8d8d8;
		box-sizing: border-box;
	}

	.left {
		display: flex;
		align-items: center;
		height: 144px;
		padding-left: 32px;
		gap: 27px;
	}

	.logo {
		display: flex;
		flex-direction: column;
		justify-content: center;
		align-items: center;
		width: 79px;
		height: 79px;
		border-radius: 18px;
		background: #ff4800;
		color: #fff;
		font-size: 29px;
		line-height: 34px;
		font-weight: 900;
	}

	.title {
		display: flex;
		align-items: center;
		height: 80px;
		font-size: 55.5px;
		color: #222;
	}

	.title i {
		width: 46px;
		height: 46px;
		margin: 5px 0 0 7px;
		border-radius: 50%;
		background: #628ce9;
		color: #fff;
		font-size: 27px;
		line-height: 44px;
		font-weight: 700;
		text-align: center;
	}

	.code {
		display: flex;
		align-items: center;
		padding-left: 11px;
		margin-top: 9px;
		font-size: 46px;
		line-height: 46px;
		letter-spacing: -1px;
		color: #666;
	}

	.code b {
		width: 47px;
		height: 39px;
		margin-left: 6px;
		border: 2px solid #aaa;
		border-radius: 7px;
		font-size: 37px;
		line-height: 40px;
		font-weight: 400;
		text-align: center;
	}

	.code em {
		margin-left: 12px;
		border-width: 17px 13px 0;
		border-top-color: #ccc;
	}

	.right {
		display: flex;
		align-items: center;
		justify-content: flex-end;
		height: 144px;
		padding-right: 33px;
	}

	.right svg:nth-child(2) {
		margin: 0 51px 0 49px;
	}

	.line-icon {
		fill: none;
		stroke: #333;
		stroke-width: 5.5;
		stroke-linecap: round;
		stroke-linejoin: round;
	}

	.notice {
		display: flex;
		align-items: center;
		justify-content: space-between;
		height: 139px;
		padding: 0 61px 0 4px;
		background: #fdeee6;
		color: #dd5510;
		font-size: 49px;
		letter-spacing: 0.1px;
	}

	.notice span {
		margin-top: -6px;
		mask-image: linear-gradient(90deg, rgba(0, 0, 0, 0.1), #000 85px);
	}

	.quote {
		display: flex;
		height: 294px;
		box-sizing: border-box;
		border-bottom: 2px solid #d8d8d8;
		font-size: 51.5px;
	}

	.price {
		width: 336px;
		padding-left: 28px;
		box-sizing: border-box;
	}

	.price strong {
		display: block;
		height: 98px;
		padding-top: 28px;
		font-size: 106px;
		line-height: 100px;
		font-weight: 700;
		letter-spacing: -8px;
		color: #f22424;
	}

	.change {
		display: flex;
		gap: 30px;
		height: 76px;
		line-height: 76px;
		letter-spacing: -0.3px;
	}

	.date {
		line-height: 71px;
		letter-spacing: -0.9px;
	}

	.details {
		width: 897px;
		padding-top: 15px;
	}

	.grid {
		display: grid;
		grid-template-columns: 278px 278px 278px;
		column-gap: 30.5px;
		grid-auto-rows: 88px;
	}

	.cell {
		display: flex;
		justify-content: space-between;
		align-items: center;
		font-size: 51px;
		letter-spacing: -0.8px;
	}

	.cell:nth-child(n + 5) {
		letter-spacing: -1.5px;
	}

	.cell .label {
		font-size: 48px;
		letter-spacing: 0;
	}

	.more {
		display: block;
		width: 146px;
		height: 67px;
		margin: 10px 0 0 auto;
		border: 2px solid #e8e8e8;
		border-radius: 8px;
		font-size: 40px;
		line-height: 58px;
	}

	nav {
		display: grid;
		grid-template-columns: 185px 194px 187px 187px 176px 185px auto;
		justify-content: start;
		align-items: center;
		height: 122px;
		padding-left: 42px;
		box-sizing: border-box;
		border-bottom: 2px solid #d8d8d8;
		font-size: 50.5px;
		color: #666;
	}

	.tab {
		height: 120px;
		text-align: left;
		line-height: 126px;
	}

	.tab.active {
		width: 80px;
		background: linear-gradient(#dd5510, #dd5510) 8px 103px / 71px 8px no-repeat;
		color: #dd5510;
	}

	.tab em {
		margin-left: 10px;
		vertical-align: 11px;
	}

	.gear {
		fill: none;
		stroke: #666;
		stroke-width: 4.5;
		stroke-linejoin: round;
	}

	.indicators {
		display: flex;
		align-items: center;
		height: 71px;
		padding: 0 16px;
		font-size: 43.5px;
		letter-spacing: -0.5px;
	}

	.chip {
		height: 54px;
		padding: 0 14px;
		box-sizing: border-box;
		border: 1.5px solid #e0e2e6;
		border-radius: 8px;
		background: #f6f7fa;
		color: #222;
		font-size: 41px;
		line-height: 50px;
		letter-spacing: 0;
	}

	.avg {
		width: 129px;
		margin-right: 16px;
		padding: 0 0 0 12px;
		text-align: left;
		font-size: 40.5px;
	}

	.avg em {
		margin-left: 5px;
		vertical-align: 8px;
		border-width: 15px 8px 0;
	}

	.ma {
		display: flex;
		justify-content: space-between;
		margin-right: 15px;
	}

	.ma i,
	.arrow {
		font-family: 'Noto Sans CJK SC', sans-serif;
	}

	.ma i {
		width: 22px;
		display: flex;
		justify-content: center;
		line-height: 50px;
		font-size: 38px;
	}

	.black {
		width: 234px;
		color: #222;
	}

	.orange {
		width: 187px;
		color: #ee981e;
	}

	.pink {
		width: 186px;
		color: #c6177e;
	}

	.dk {
		width: 148px;
		margin: 0 40px 0 auto;
		padding: 0 0 0 15px;
		text-align: left;
	}

	.dk em {
		margin-left: 14px;
		vertical-align: -3px;
		border-width: 0 0 14px 13px;
		border-style: solid;
		border-color: transparent transparent #222;
	}

	.indicators .chip:last-child {
		width: 154px;
		margin-right: 0;
		padding: 0;
	}

	.mark {
		fill: #f7f7f7;
		font-weight: 900;
	}

	.frame {
		fill: none;
		stroke: #e0e0e0;
		stroke-width: 1.5;
	}

	.axis {
		fill: #888;
		font-size: 48px;
	}

	.ma-line {
		fill: none;
		stroke-width: 3.5;
		stroke-linejoin: round;
	}

	.tools {
		fill: none;
		stroke: #dd5510;
		stroke-width: 3.5;
	}

	.tools circle {
		stroke: none;
		fill: rgba(255, 110, 30, 0.1);
	}

	.tools .off {
		fill: rgba(0, 0, 0, 0.05);
	}

	.pill {
		fill: #f6f7fa;
		stroke: #e0e2e6;
	}

	.fade {
		height: 20px;
		background: linear-gradient(#fefefe, #efefef);
	}

	.day {
		height: 175px;
		background: #f6f8fa;
	}

	.day-head {
		display: flex;
		justify-content: space-between;
		align-items: center;
		height: 107px;
		padding: 0 19px 0 22px;
		font-size: 56px;
		letter-spacing: -0.9px;
	}

	.day-head a {
		display: flex;
		align-items: center;
		margin-top: -6px;
		color: #dd5510;
		font-size: 48.5px;
		letter-spacing: 0;
		text-decoration: none;
	}

	.day-head a svg {
		fill: none;
		stroke: #dd5510;
		stroke-width: 5;
	}

	.day-head a svg:first-child {
		margin-right: 15px;
	}

	.day-head a svg:last-child {
		margin-left: 16px;
		stroke-width: 3.5;
	}

	.day-row {
		display: grid;
		grid-template-columns: 267px 311px 270px auto;
		justify-content: start;
		padding-left: 22px;
		font-size: 48.5px;
		line-height: 50px;
		letter-spacing: -0.8px;
	}

	.day-row .label {
		font-size: 46px;
		letter-spacing: 0;
	}

	.day-row div:nth-child(2) .up {
		letter-spacing: 0.5px;
	}

	.minute text {
		font-size: 48px;
	}

	.minute .mark {
		font-size: 124px;
	}

	.now-line,
	.avg-line {
		fill: none;
		stroke: #3672b8;
		stroke-width: 4;
		stroke-linejoin: round;
		vector-effect: non-scaling-stroke;
	}

	.avg-line {
		stroke: #e8a038;
		stroke-width: 2;
	}

	.turnover {
		display: flex;
		align-items: center;
		height: 71px;
		padding-left: 301px;
		gap: 3px;
		font-size: 43.5px;
		letter-spacing: -0.8px;
	}

	.turnover span {
		margin-top: -6px;
	}

	.turnover .chip {
		width: 155px;
		height: 52px;
		margin-bottom: 3px;
		padding: 0 0 0 12px;
		font-size: 34px;
		text-align: left;
	}

	.turnover em {
		margin-left: 10px;
		vertical-align: 5px;
	}

	.times {
		display: flex;
		height: 69px;
		padding: 0 14px;
		line-height: 73px;
		font-size: 47.5px;
		color: #999;
	}

	.times span:nth-child(1) {
		width: 284px;
	}

	.times span:nth-child(2) {
		width: 356px;
	}

	.times span:last-child {
		margin-left: auto;
	}

	footer {
		height: 190px;
		box-sizing: border-box;
		border-top: 2px solid #d4d8dc;
		background: #f6f8fa;
	}

	.actions {
		display: flex;
		height: 170px;
		padding: 0 160px 0 111px;
		font-size: 52px;
	}

	.actions button {
		display: flex;
		align-items: center;
		height: 126px;
		gap: 15px;
		color: #dd5510;
	}

	.actions span {
		margin-top: -5px;
	}

	.actions button:nth-child(2) {
		margin-left: 226px;
	}

	.actions .close {
		margin-left: auto;
		font-size: 50px;
		color: #666;
	}

	.actions svg {
		fill: none;
		stroke: #dd5510;
		stroke-width: 3.5;
	}

	.home {
		display: grid;
		grid-template-columns: 286px 394px 286px;
		justify-content: center;
		gap: 8px;
	}

	.home i {
		height: 15px;
		background: #babcbe;
	}

	.home i:first-child {
		border-radius: 7px 0 0 7px;
	}

	.home i:last-child {
		border-radius: 0 7px 7px 0;
	}
</style>
